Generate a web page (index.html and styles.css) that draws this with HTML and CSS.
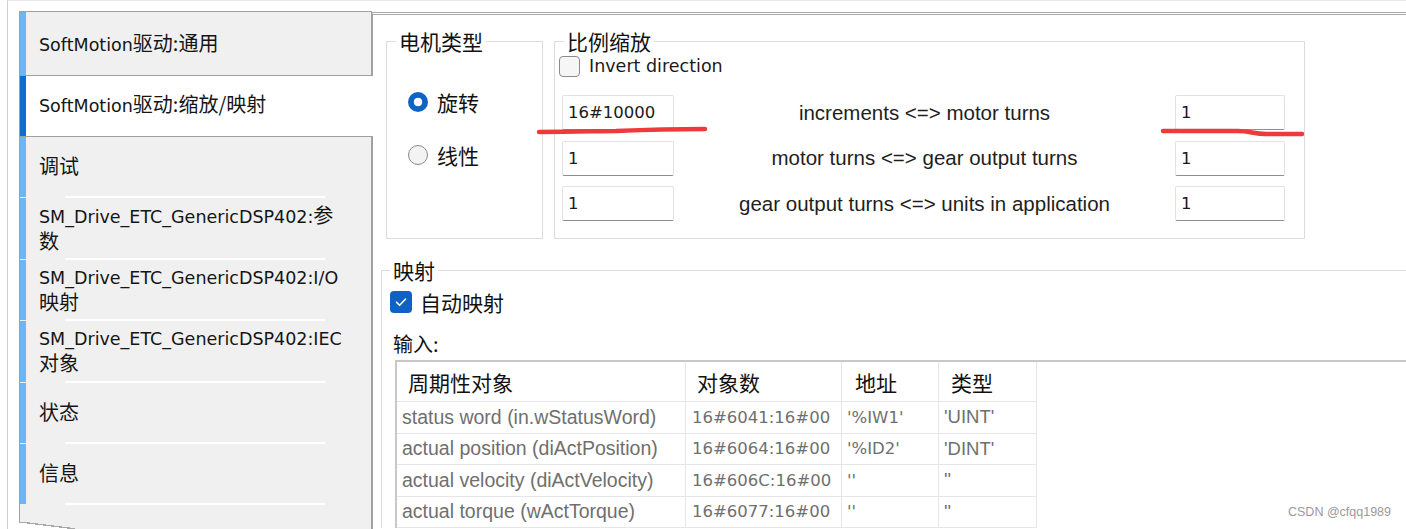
FILE: index.html
```html
<!DOCTYPE html>
<html lang="zh-CN">
<head>
<meta charset="utf-8">
<title>SoftMotion 驱动</title>
<link rel="stylesheet" href="styles.css">
</head>
<body>
<div class="frame">
  <nav class="tabs">
    <div class="tab tab-first"><span><span class="lat">SoftMotion</span>驱动:通用</span></div>
    <div class="tab tab-active"><span><span class="lat">SoftMotion</span>驱动:缩放/映射</span></div>
    <div class="tab-group">
      <div class="gtab"><span>调试</span></div>
      <div class="gtab"><span><span class="lat">SM_Drive_ETC_GenericDSP402:</span>参<br>数</span></div>
      <div class="gtab"><span><span class="lat">SM_Drive_ETC_GenericDSP402:I/O</span><br>映射</span></div>
      <div class="gtab"><span><span class="lat">SM_Drive_ETC_GenericDSP402:IEC</span><br>对象</span></div>
      <div class="gtab"><span>状态</span></div>
      <div class="gtab"><span>信息</span></div>
      <div class="tab-rest"></div>
    </div>
  </nav>
  <main class="pane">
    <div class="groups">
      <fieldset class="group motor">
        <legend>电机类型</legend>
        <div class="radio-row first"><span class="radio on"></span>旋转</div>
        <div class="radio-row second"><span class="radio"></span>线性</div>
      </fieldset>
      <fieldset class="group scale">
        <legend>比例缩放</legend>
        <div class="check-row"><span class="checkbox"></span>Invert direction</div>
        <div class="scale-grid">
          <div class="field">16#10000</div>
          <div class="flabel">increments &lt;=&gt; motor turns</div>
          <div class="field">1</div>
          <div class="field">1</div>
          <div class="flabel">motor turns &lt;=&gt; gear output turns</div>
          <div class="field">1</div>
          <div class="field">1</div>
          <div class="flabel">gear output turns &lt;=&gt; units in application</div>
          <div class="field">1</div>
        </div>
      </fieldset>
    </div>
    <fieldset class="group mapping">
      <legend>映射</legend>
      <div class="auto-row"><span class="checkbox checked"><svg viewBox="0 0 22 22" width="22" height="22"><path d="M6.5 11.2 L9.6 14.3 L15.6 8" fill="none" stroke="#fff" stroke-width="1.6" stroke-linecap="round" stroke-linejoin="round"/></svg></span>自动映射</div>
      <div class="input-label">输入:</div>
      <div class="grid">
        <div class="grid-row head">
          <div class="c c1">周期性对象</div>
          <div class="c c2">对象数</div>
          <div class="c c3">地址</div>
          <div class="c c4">类型</div>
        </div>
        <div class="grid-row">
          <div class="c c1">status word (in.wStatusWord)</div>
          <div class="c c2">16#6041:16#00</div>
          <div class="c c3">'%IW1'</div>
          <div class="c c4">'UINT'</div>
        </div>
        <div class="grid-row">
          <div class="c c1">actual position (diActPosition)</div>
          <div class="c c2">16#6064:16#00</div>
          <div class="c c3">'%ID2'</div>
          <div class="c c4">'DINT'</div>
        </div>
        <div class="grid-row">
          <div class="c c1">actual velocity (diActVelocity)</div>
          <div class="c c2">16#606C:16#00</div>
          <div class="c c3">''</div>
          <div class="c c4">''</div>
        </div>
        <div class="grid-row">
          <div class="c c1">actual torque (wActTorque)</div>
          <div class="c c2">16#6077:16#00</div>
          <div class="c c3">''</div>
          <div class="c c4">''</div>
        </div>
      </div>
    </fieldset>
  </main>
</div>
<svg class="marks" width="1406" height="529" viewBox="0 0 1406 529">
  <path d="M539 132 C 575 132, 600 131, 616 131 C 640 130, 680 129, 705 129" fill="none" stroke="#ee3a3a" stroke-width="4.5" stroke-linecap="round"/>
  <path d="M1163 131 L1238 131 C1250 131, 1254 134, 1266 134 L1302 134" fill="none" stroke="#ee3a3a" stroke-width="4.5" stroke-linecap="round"/>
</svg>
<div class="watermark">CSDN @cfqq1989</div>
</body>
</html>
```
FILE: styles.css
```css
* { box-sizing: border-box; }
html, body { margin: 0; padding: 0; background: #fff; }
body {
  width: 1406px;
  height: 529px;
  overflow: hidden;
  position: relative;
  font-family: "DejaVu Sans", "Noto Sans CJK SC", sans-serif;
  color: #1a1a1a;
}
.frame {
  display: flex;
  height: 529px;
  margin-left: 7px;
  border-left: 1px solid #cfcfcf;
  border-top: 1px solid #e8e8e8;
  padding: 10px 0 0 11px;
}

/* ---------- left tab list ---------- */
.tabs {
  flex: none;
  width: 353px;
  display: flex;
  flex-direction: column;
  font-family: "Noto Sans CJK SC", sans-serif;
  font-size: 20px;
  line-height: 23px;
  color: #151515;
}
.lat {
  font-family: "DejaVu Sans", sans-serif;
  font-size: 17.5px;
}
.tab {
  display: flex;
  align-items: center;
  padding-left: 19px;
  border-left: 1px solid #a0a0a0;
}
.tab-first {
  height: 65px;
  border: 1px solid #a0a0a0;
  background: #f0f0f0;
  box-shadow: inset 6px 0 0 #6cb6f5;
}
.tab-active {
  height: 60px;
  padding-bottom: 2px;
  background: #fff;
  margin-right: -1px;
  position: relative;
  z-index: 1;
  box-shadow: inset 6px 0 0 #0c6ed0;
}
.tab-group {
  flex: 1;
  display: flex;
  flex-direction: column;
  border: 1px solid #a0a0a0;
  border-bottom: none;
  background: #f0f0f0;
  position: relative;
}
.tab-group::after {
  content: "";
  position: absolute;
  left: -1px;
  bottom: 0;
  width: 56px;
  height: 7px;
  background: linear-gradient(to top right, #fff 0 46%, #a8a8a8 46% 56%, transparent 56%);
}
.gtab {
  height: 61.4px;
  flex: none;
  display: flex;
  align-items: center;
  padding-left: 19px;
  padding-bottom: 4px;
  background:
    linear-gradient(#fff, #fff) 45px 100% / 260px 2px no-repeat,
    linear-gradient(#6cb6f5, #6cb6f5) 0 0 / 6px calc(100% - 1px) no-repeat,
    #f0f0f0;
}
.tab-rest { flex: 1; }

/* ---------- content pane ---------- */
.pane {
  flex: 1;
  margin-top: 1px;
  border-top: 3px double #a8a8a8;
  border-left: 1px solid #a0a0a0;
  padding: 13px 0 0 8px;
  background: #fff;
  min-width: 0;
}
.groups {
  display: flex;
  gap: 11px;
  margin-left: 5px;
  align-items: stretch;
}
.group {
  margin: 0;
  padding: 0;
  border: 1px solid #dcdcdc;
  min-width: 0;
}
.group legend {
  padding: 0 3px;
  margin-left: 9px;
  font-family: "Noto Sans CJK SC", sans-serif;
  font-size: 21px;
  line-height: 26px;
  color: #111;
}
.motor { flex: none; width: 157px; }
.radio-row {
  display: flex;
  align-items: center;
  gap: 9px;
  height: 26px;
  padding-left: 21px;
  font-family: "Noto Sans CJK SC", sans-serif;
  font-size: 21px;
  color: #111;
}
.radio-row.first { margin-top: 35px; }
.radio-row.second { margin-top: 27px; }
.radio {
  flex: none;
  width: 20px;
  height: 20px;
  border-radius: 50%;
  background: #f3f3f3;
  border: 1px solid #8a8a8a;
}
.radio.on {
  border: none;
  background: radial-gradient(circle, #fff 0 4px, #0f63c4 4.6px);
}

.scale { flex: none; width: 751px; }
.check-row {
  display: flex;
  align-items: center;
  gap: 9px;
  height: 22px;
  margin-top: 1px;
  padding-left: 4px;
  font-size: 17.5px;
  color: #1a1a1a;
}
.checkbox {
  flex: none;
  width: 21px;
  height: 21px;
  border: 1px solid #8b8b8b;
  border-radius: 4px;
  background: #f6f6f6;
}
.checkbox.checked {
  width: 22px;
  height: 22px;
  border: none;
  background: #1061c4;
  display: flex;
}
.scale-grid {
  display: grid;
  grid-template-columns: 112px 1fr 110px;
  grid-auto-rows: 35px;
  row-gap: 10.5px;
  margin-top: 18px;
  padding: 0 19px 17px 7px;
}
.field {
  display: flex;
  align-items: center;
  padding-left: 5px;
  border: 1px solid #e2e2e2;
  border-bottom: 1px solid #8e8e8e;
  border-radius: 2px;
  background: #fff;
  font-size: 16.5px;
  color: #1a1a1a;
}
.flabel {
  display: flex;
  align-items: center;
  justify-content: center;
  font-family: "Liberation Sans", sans-serif;
  font-size: 20.5px;
  color: #1e1e1e;
}

/* ---------- mapping ---------- */
.mapping {
  margin-top: 18px;
  border-right: none;
  border-bottom: none;
}
.mapping legend { margin-left: 8px; }
.auto-row {
  display: flex;
  align-items: center;
  gap: 8px;
  height: 22px;
  margin-top: 8px;
  padding-left: 8px;
  font-family: "Noto Sans CJK SC", sans-serif;
  font-size: 21px;
  color: #111;
}
.input-label {
  margin-top: 18px;
  height: 26px;
  line-height: 26px;
  padding-left: 11px;
  font-family: "Noto Sans CJK SC", sans-serif;
  font-size: 20px;
  color: #111;
}
.grid {
  margin-top: 3px;
  margin-left: 13px;
  border-top: 2px solid #c8c8c8;
  border-left: 2px solid #c8c8c8;
}
.grid-row {
  display: grid;
  grid-template-columns: 289px 156px 97px 98px;
  height: 31.5px;
}
.grid-row.head { height: 40px; }
.c {
  display: flex;
  align-items: center;
  border-right: 1px solid #e6e6e6;
  border-bottom: 1px solid #e6e6e6;
  white-space: nowrap;
  overflow: hidden;
  color: #6f6f6f;
}
.grid-row .c1 { padding-left: 5px; font-family: "Liberation Sans", sans-serif; font-size: 19.5px; }
.grid-row .c2 { padding-left: 6px; font-size: 16.5px; }
.grid-row .c3 { padding-left: 5px; font-size: 16.5px; }
.grid-row .c4 { padding-left: 5px; font-family: "Liberation Sans", sans-serif; font-size: 18.5px; }
.grid-row.head .c {
  font-family: "Noto Sans CJK SC", sans-serif;
  font-size: 21px;
  color: #111;
}
.grid-row.head .c1 { padding-left: 11px; }
.grid-row.head .c2 { padding-left: 11px; }
.grid-row.head .c3 { padding-left: 13px; }
.grid-row.head .c4 { padding-left: 12px; }

/* ---------- overlays ---------- */
.marks {
  position: absolute;
  left: 0;
  top: 0;
  pointer-events: none;
}
.watermark {
  position: absolute;
  right: 15px;
  bottom: 9px;
  font-family: "Liberation Sans", sans-serif;
  font-size: 12.5px;
  line-height: 15px;
  color: #9a9a9a;
}
```
